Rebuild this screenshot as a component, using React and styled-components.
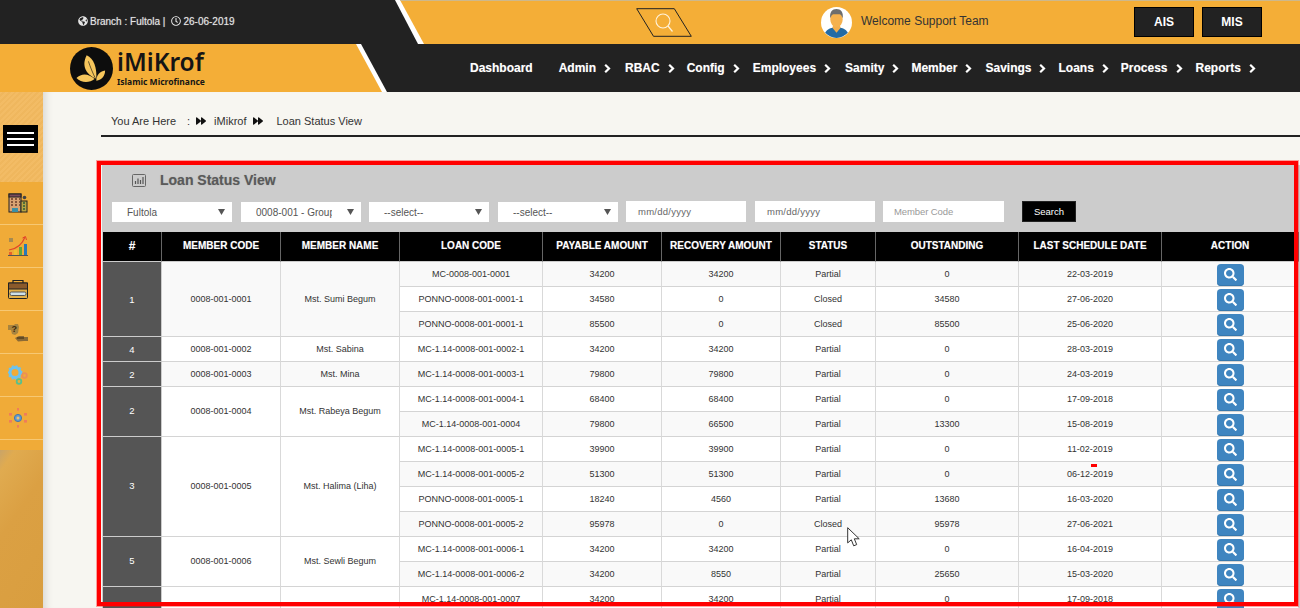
import React from "react";
import styled, { createGlobalStyle } from "styled-components";
import { FaGlobeAmericas, FaRegClock, FaForward, FaSearch } from "react-icons/fa";

const Global = createGlobalStyle`
  html, body { margin: 0; padding: 0; height: 608px; overflow: hidden; background: #f7f6f1; }
  body { font-family: "Liberation Sans", Arial, sans-serif; }
  * { box-sizing: border-box; }
`;

const Page = styled.div`
  position: relative;
  width: 1300px;
  height: 608px;
  overflow: hidden;
  display: flex;
  flex-direction: column;
`;

const HeaderRow = styled.div`
  display: flex;
  flex: none;
  background: #222;
  height: ${(p) => p.$h}px;
`;

const BranchInfo = styled.div`
  width: 395px;
  flex: none;
  padding: 0 0 2px 78px;
  display: flex;
  align-items: center;
  font-size: 10px;
  color: #e4e4e4;
  text-shadow: 0 0 1px rgba(255, 255, 255, 0.5);
  svg { font-size: 10px; margin-right: 2px; }
`;

const Sep = styled.span`
  margin: 0 6px 0 0;
`;

const TopStripe = styled.div`
  flex: 1;
  background: #fff;
  clip-path: polygon(0 0, 100% 0, 100% 100%, 23px 100%);
`;

const TopOrange = styled.div`
  height: 100%;
  background: #f4ae37;
  border-top: 1px solid #cdb88c;
  clip-path: polygon(5px 0, 100% 0, 100% 100%, 29px 100%);
  display: flex;
  align-items: center;
  padding-left: 241px;
`;

const SearchBox = styled.svg`
  width: 56px;
  height: 29px;
  flex: none;
  margin-top: -1px;
`;

const Avatar = styled.svg`
  width: 31px;
  height: 31px;
  flex: none;
  margin-left: 129px;
`;

const Welcome = styled.span`
  font-size: 12px;
  color: #333;
  margin: -3px 0 0 9px;
  width: 273px;
  flex: none;
`;

const TopButton = styled.div`
  width: 60px;
  height: 30px;
  flex: none;
  margin-right: 8px;
  margin-top: -1px;
  background: #222;
  border: 1px solid #000;
  color: #fff;
  font-size: 12px;
  font-weight: bold;
  display: flex;
  align-items: center;
  justify-content: center;
`;

const LogoStripe = styled.div`
  width: 387px;
  flex: none;
  background: #fff;
  clip-path: polygon(0 0, 361px 0, 100% 100%, 0 100%);
`;

const LogoOrange = styled.div`
  height: 100%;
  background: #f4ae37;
  clip-path: polygon(0 0, 356px 0, 382px 100%, 0 100%);
  display: flex;
  align-items: center;
  padding-left: 70px;
`;

const LogoMark = styled.svg`
  width: 43px;
  height: 43px;
  flex: none;
`;

const LogoText = styled.div`
  margin-left: 4px;
  display: flex;
  flex-direction: column;
  color: #151515;
  font-family: "Noto Sans", "Open Sans", sans-serif;
`;

const LogoName = styled.span`
  font-size: 24.5px;
  font-weight: 600;
  line-height: 26px;
`;

const LogoSub = styled.span`
  font-size: 8.5px;
  font-weight: 700;
  line-height: 10px;
  margin-top: 2px;
`;

const Nav = styled.nav`
  display: flex;
  align-items: center;
  margin-left: 83px;
  color: #fff;
  font-size: 12px;
  font-weight: bold;
  text-shadow: 0 0 1px rgba(255, 255, 255, 0.4);
`;

const NavItem = styled.span`
  display: flex;
  align-items: center;
  gap: 8px;
  margin-right: ${(p) => p.$gap}px;
`;

const Chevron = styled.svg`
  width: 7px;
  height: 9px;
  flex: none;
`;

const Body = styled.div`
  flex: 1;
  min-height: 0;
  display: flex;
`;

const Sidebar = styled.aside`
  width: 43px;
  flex: none;
  display: flex;
  flex-direction: column;
  background: #f4ae37;
`;

const SideTop = styled.div`
  height: 90px;
  flex: none;
  padding: 33px 0 0 3px;
  background:
    repeating-linear-gradient(135deg, rgba(255, 255, 255, 0.04) 0 2px, rgba(0, 0, 0, 0.012) 2px 4px),
    #f2b95f;
`;

const Hamburger = styled.div`
  width: 35px;
  height: 28px;
  background: #000;
  display: flex;
  flex-direction: column;
  justify-content: center;
  gap: 4px;
  padding: 0 4px;
`;

const HamburgerLine = styled.span`
  height: 2px;
  background: #fff;
`;

const SideItem = styled.div`
  height: 43px;
  flex: none;
  border-bottom: 1px solid #f7c873;
  background: #f0ab38;
  display: flex;
  align-items: center;
  padding-left: 8px;
`;

const SideIcon = styled.svg`
  width: 20px;
  height: 20px;
`;

const SideGap = styled.div`
  height: 10px;
  flex: none;
  background: #f0ab38;
`;

const SideWood = styled.div`
  flex: 1;
  background:
    linear-gradient(125deg, #c9a468 0, #e0ab50 10%, #dba043 40%, #d99e3f 100%);
`;

const Main = styled.main`
  flex: 1;
  min-width: 0;
  padding-left: 58px;
  background: #f7f6f1;
  box-shadow: inset 9px 0 8px -7px rgba(0, 0, 0, 0.14);
`;

const Crumbs = styled.div`
  display: flex;
  align-items: center;
  height: 45px;
  padding: 14px 0 0 10px;
  border-bottom: 2px solid #222;
  font-size: 11px;
  color: #333;
  svg { font-size: 10px; color: #111; }
`;

const CrumbText = styled.span`
  margin-right: ${(p) => p.$mr}px;
`;

const CrumbIcon = styled.span`
  display: inline-flex;
  margin-right: ${(p) => p.$mr}px;
`;

const Panel = styled.section`
  margin: 28px 0 0 1px;
  background: #ccc;
  padding-top: 8px;
`;

const PanelTitle = styled.h2`
  margin: 0;
  height: 28px;
  padding-left: 30px;
  display: flex;
  align-items: flex-start;
  font-size: 14px;
  line-height: 15px;
  font-weight: bold;
  color: #5a5a5a;
  text-shadow: 0 0 1px rgba(80, 80, 80, 0.4);
`;

const TitleIcon = styled.svg`
  width: 14px;
  height: 13px;
  margin-right: 14px;
  flex: none;
  margin-top: 1px;
`;

const Filters = styled.div`
  display: flex;
  align-items: flex-end;
  height: 21px;
  padding-left: 10px;
  margin-bottom: 10px;
`;

const SelectBox = styled.div`
  width: 120px;
  height: 20px;
  flex: none;
  margin-right: ${(p) => p.$mr}px;
  background: #fff;
  display: flex;
  align-items: center;
  padding: 0 7px 0 15px;
  font-size: 10px;
  color: #555;
`;

const SelectText = styled.span`
  width: 76px;
  flex: none;
  overflow: hidden;
  white-space: nowrap;
`;

const Caret = styled.svg`
  width: 7px;
  height: 6px;
  flex: none;
  margin-left: auto;
`;

const FieldBox = styled.div`
  width: ${(p) => p.$w}px;
  height: 21px;
  flex: none;
  margin-right: ${(p) => p.$mr}px;
  background: #fff;
  display: flex;
  align-items: center;
  padding-left: ${(p) => p.$pl}px;
  font-size: 9.5px;
  color: ${(p) => (p.$muted ? "#999" : "#666")};
  letter-spacing: ${(p) => (p.$muted ? "-0.1px" : "0.25px")};
`;

const SearchButton = styled.div`
  width: 54px;
  height: 21px;
  flex: none;
  background: #000;
  border: 1px solid #222;
  color: #fff;
  font-size: 9.5px;
  display: flex;
  align-items: center;
  justify-content: center;
`;

const Table = styled.table`
  width: 1196px;
  margin-left: 1px;
  table-layout: fixed;
  border-collapse: separate;
  border-spacing: 0;
  font-size: 9px;
  color: #333;
`;

const Th = styled.th`
  height: 30px;
  padding: 0 0 2px;
  background: #000;
  color: #fff;
  font-size: ${(p) => (p.$big ? 12 : 10)}px;
  font-weight: bold;
  text-align: center;
  vertical-align: middle;
  border-right: 1px solid #666;
  border-bottom: 1px solid #ccc;
  text-shadow: 0 0 1px rgba(255, 255, 255, 0.4);
`;

const Tr = styled.tr`
  &:nth-child(odd) td { background: #f9f9f9; }
  &:nth-child(even) td { background: #fff; }
`;

const Td = styled.td`
  height: 25px;
  padding: 0 0 ${(p) => (p.$lift ? 2 : 0)}px;
  text-align: center;
  vertical-align: middle;
  border-right: 1px solid #d9d9d9;
  border-bottom: 1px solid #d4d4d4;
`;

const IndexTd = styled(Td)`
  &&& { background: #555; }
  color: #fff;
  font-size: 9.5px;
  border-right-color: #ccc;
  border-bottom-color: #ccc;
`;

const ActionButton = styled.div`
  width: 27px;
  height: 22px;
  margin: 1px auto 0;
  background: #3f85c0;
  border-radius: 4px;
  box-shadow: inset 0 -1px 0 #3577ad;
  color: #fff;
  display: flex;
  align-items: center;
  justify-content: center;
  svg { font-size: 13px; }
`;

const RedFrame = styled.div`
  position: absolute;
  left: 97px;
  top: 161px;
  width: 1201px;
  height: 445px;
  border: 4px solid #f00;
  box-shadow: 0 0 0 1px rgba(255, 0, 0, 0.35);
  pointer-events: none;
`;

const RedMark = styled.div`
  position: absolute;
  left: 1091px;
  top: 464px;
  width: 6px;
  height: 3px;
  background: #f00;
`;

const Cursor = styled.svg`
  position: absolute;
  left: 847px;
  top: 527px;
  width: 14px;
  height: 20px;
`;

const navItems = [
  ["Admin", 14], ["RBAC", 12], ["Config", 13], ["Employees", 14], ["Samity", 12], ["Member", 13],
  ["Savings", 12], ["Loans", 12], ["Process", 13], ["Reports", 0],
];

const widths = [59, 119, 119, 143, 119, 119, 95, 143, 143, 137];
const heads = ["#", "MEMBER CODE", "MEMBER NAME", "LOAN CODE", "PAYABLE AMOUNT", "RECOVERY AMOUNT", "STATUS", "OUTSTANDING", "LAST SCHEDULE DATE", "ACTION"];

const groups = [
  ["1", "0008-001-0001", "Mst. Sumi Begum", [
    ["MC-0008-001-0001", "34200", "34200", "Partial", "0", "22-03-2019"],
    ["PONNO-0008-001-0001-1", "34580", "0", "Closed", "34580", "27-06-2020"],
    ["PONNO-0008-001-0001-1", "85500", "0", "Closed", "85500", "25-06-2020"],
  ]],
  ["4", "0008-001-0002", "Mst. Sabina", [
    ["MC-1.14-0008-001-0002-1", "34200", "34200", "Partial", "0", "28-03-2019"],
  ]],
  ["2", "0008-001-0003", "Mst. Mina", [
    ["MC-1.14-0008-001-0003-1", "79800", "79800", "Partial", "0", "24-03-2019"],
  ]],
  ["2", "0008-001-0004", "Mst. Rabeya Begum", [
    ["MC-1.14-0008-001-0004-1", "68400", "68400", "Partial", "0", "17-09-2018"],
    ["MC-1.14-0008-001-0004", "79800", "66500", "Partial", "13300", "15-08-2019"],
  ]],
  ["3", "0008-001-0005", "Mst. Halima (Liha)", [
    ["MC-1.14-0008-001-0005-1", "39900", "39900", "Partial", "0", "11-02-2019"],
    ["MC-1.14-0008-001-0005-2", "51300", "51300", "Partial", "0", "06-12-2019"],
    ["PONNO-0008-001-0005-1", "18240", "4560", "Partial", "13680", "16-03-2020"],
    ["PONNO-0008-001-0005-2", "95978", "0", "Closed", "95978", "27-06-2021"],
  ]],
  ["5", "0008-001-0006", "Mst. Sewli Begum", [
    ["MC-1.14-0008-001-0006-1", "34200", "34200", "Partial", "0", "16-04-2019"],
    ["MC-1.14-0008-001-0006-2", "34200", "8550", "Partial", "25650", "15-03-2020"],
  ]],
  ["", "", "", [
    ["MC-1.14-0008-001-0007", "34200", "34200", "Partial", "0", "17-09-2018"],
  ]],
];

const CaretIcon = () => (
  <Caret viewBox="0 0 7 6"><path d="M0 0h7L3.5 6z" fill="#555" /></Caret>
);

const ChevronIcon = () => (
  <Chevron viewBox="0 0 7 9">
    <path d="M1.2 .8L5 4.5 1.2 8.2" fill="none" stroke="#fff" strokeWidth="2.2" />
  </Chevron>
);

const sideIcons = [
  <>
    <rect x="1" y="1" width="12" height="18" fill="#d9a273" stroke="#222" />
    <rect x="1" y="1" width="12" height="3" fill="#7a4a5a" stroke="#222" />
    <path d="M3 6h2M7 6h2M11 6h1M3 9h2M7 9h2M11 9h1M3 12h2M7 12h2M11 12h1" stroke="#6b3d2a" strokeWidth="1.5" />
    <rect x="4" y="15" width="6" height="4" fill="#3b8fa6" />
    <rect x="13" y="8" width="6" height="11" fill="#b9a341" stroke="#222" />
    <path d="M15 10h2M15 13h2M15 16h2" stroke="#2f5d3a" strokeWidth="1.5" />
    <circle cx="16.5" cy="4.5" r="1.8" fill="#444" />
  </>,
  <>
    <rect x="1" y="2" width="4" height="4" fill="#a68a50" />
    <path d="M0 19.5h20" stroke="#555" />
    <rect x="1" y="16" width="3" height="3" fill="#e8622a" />
    <rect x="6" y="14" width="3" height="5" fill="#f0c030" />
    <rect x="11" y="11" width="3" height="8" fill="#5fa83c" />
    <rect x="16" y="8" width="3" height="11" fill="#2a79b8" />
    <path d="M1 14C8 13 14 9 17 1" fill="none" stroke="#e2452a" strokeWidth="1.2" />
    <path d="M14.5 2L17.5 .5l1 3.5" fill="none" stroke="#e2452a" />
  </>,
  <>
    <path d="M5 4V1.5h10V4" fill="none" stroke="#222" strokeWidth="1.2" />
    <rect x=".5" y="4" width="19" height="15.5" rx="1" fill="#e3b04a" stroke="#222" />
    <rect x=".5" y="4" width="19" height="6" fill="#8a5a2b" stroke="#222" />
    <rect x="2" y="13" width="16" height="3.5" rx="1.5" fill="#cfe0e8" stroke="#555" />
  </>,
  <>
    <path d="M0 3h6l1-1h3l1 3-1 6-3 2-3-1-1-4H0z" fill="#a8843f" />
    <text x="3.5" y="10" fontSize="9" fontWeight="bold" fill="#3a2a10" fontFamily="Liberation Sans">?</text>
    <path d="M7 16l4-2h5v1h4v4h-4l-6 .5z" fill="#8b6a35" />
    <path d="M9 16h7" stroke="#3a2a10" />
  </>,
  <>
    <circle cx="7" cy="7.5" r="5" fill="none" stroke="#6bc3ef" strokeWidth="3" />
    <circle cx="7" cy="7.5" r="6.7" fill="none" stroke="#6bc3ef" strokeWidth="1.4" strokeDasharray="2 2" />
    <circle cx="16.5" cy="10.5" r="2.3" fill="none" stroke="#ec8f55" strokeWidth="1.8" />
    <circle cx="11" cy="16.5" r="2.3" fill="none" stroke="#58c08c" strokeWidth="1.8" />
  </>,
  <>
    <circle cx="10" cy="10" r="3.6" fill="#5f9ad0" stroke="#4a78a8" />
    <circle cx="10" cy="10" r="1.5" fill="#e9c17a" />
    <g fill="#ef7d5a">
      <rect x="9" y="0" width="2" height="2.6" />
      <rect x="9" y="17" width="2" height="2.6" />
      <rect x="1" y="5" width="3" height="2.6" />
      <rect x="16" y="5" width="3" height="2.6" />
      <rect x="1" y="12" width="3" height="2.6" />
      <rect x="16" y="12" width="3" height="2.6" />
    </g>
  </>,
];

const LoanRow = ({ lead, row }) => (
  <Tr>
    {lead}
    {row.map((v, i) => <Td key={i}>{v}</Td>)}
    <Td><ActionButton><FaSearch /></ActionButton></Td>
  </Tr>
);

export default function App() {
  return (
    <Page>
      <Global />
      <HeaderRow $h={44}>
        <BranchInfo>
          <FaGlobeAmericas />
          Branch : Fultola |<Sep />
          <FaRegClock />
          26-06-2019
        </BranchInfo>
        <TopStripe>
          <TopOrange>
            <SearchBox viewBox="0 0 56 29">
              <path d="M.7 .7h37.6l17 27.6H17.5z" fill="none" stroke="#222" />
              <circle cx="27" cy="13" r="7" fill="none" stroke="#fff3dc" strokeWidth="1.1" />
              <path d="M32 18l4.5 5.5" stroke="#fff3dc" strokeWidth="1.2" />
            </SearchBox>
            <Avatar viewBox="0 0 30 30">
              <circle cx="15" cy="15" r="15" fill="#fff" />
              <path d="M4 25c2-4 6-5 8-5h6c2 0 6 1 8 5-3 3-7 5-11 5s-8-2-11-5z" fill="#236ba4" />
              <path d="M11 20l4 5 4-5-1-3h-6z" fill="#f4ae4c" />
              <ellipse cx="15" cy="12" rx="6" ry="7.5" fill="#f5b14e" />
              <path d="M9 11c-1-6 2-9 6-9s7 3 6 9c-1-3-2-4-3-4h-6c-1 0-2 1-3 4z" fill="#6d6d6d" />
            </Avatar>
            <Welcome>Welcome Support Team</Welcome>
            <TopButton>AIS</TopButton>
            <TopButton>MIS</TopButton>
          </TopOrange>
        </TopStripe>
      </HeaderRow>

      <HeaderRow $h={48}>
        <LogoStripe>
          <LogoOrange>
            <LogoMark viewBox="0 0 42 42">
              <circle cx="21" cy="21" r="21" fill="#0d0d0d" />
              <path d="M16.3 8c7 3 10 12 9.4 23C18 28 10 20 16.3 8z" fill="#f6c65c" />
              <path d="M6.3 30.3c5-5 12-4.500 17.700 1-5 4-13 4-17.700-1z" fill="#f6c65c" />
              <path d="M34.300 23c0 5-3 9-8.600 10 0-5 3-9 8.600-10z" fill="#f6c65c" />
              <path d="M18 14c2 6 4 11 7 17" fill="none" stroke="#0d0d0d" strokeWidth=".6" />
            </LogoMark>
            <LogoText>
              <LogoName>iMiKrof</LogoName>
              <LogoSub>Islamic Microfinance</LogoSub>
            </LogoText>
          </LogoOrange>
        </LogoStripe>
        <Nav>
          <NavItem $gap={26}>Dashboard</NavItem>
          {navItems.map(([t, g]) => (
            <NavItem key={t} $gap={g}>{t}<ChevronIcon /></NavItem>
          ))}
        </Nav>
      </HeaderRow>

      <Body>
        <Sidebar>
          <SideTop>
            <Hamburger>
              <HamburgerLine /><HamburgerLine /><HamburgerLine />
            </Hamburger>
          </SideTop>
          {sideIcons.map((icon, i) => (
            <SideItem key={i}><SideIcon viewBox="0 0 20 20">{icon}</SideIcon></SideItem>
          ))}
          <SideGap />
          <SideWood />
        </Sidebar>
        <Main>
          <Crumbs>
            <CrumbText $mr={11}>You Are Here</CrumbText>
            <CrumbText $mr={6}>:</CrumbText>
            <CrumbIcon $mr={8}><FaForward /></CrumbIcon>
            <CrumbText $mr={7}>iMikrof</CrumbText>
            <CrumbIcon $mr={13}><FaForward /></CrumbIcon>
            <CrumbText $mr={0}>Loan Status View</CrumbText>
          </Crumbs>
          <Panel>
            <PanelTitle>
              <TitleIcon viewBox="0 0 14 13">
                <rect x=".5" y=".5" width="13" height="12" rx="1" fill="none" stroke="#666" />
                <path d="M3.500 10V7M6 10V4.500M8.500 10V6M11 10V3" stroke="#555" strokeWidth="1.2" />
              </TitleIcon>
              Loan Status View
            </PanelTitle>
            <Filters>
              <SelectBox $mr={9}><SelectText>Fultola</SelectText><CaretIcon /></SelectBox>
              <SelectBox $mr={8}><SelectText>0008-001 - Group</SelectText><CaretIcon /></SelectBox>
              <SelectBox $mr={9}><SelectText>--select--</SelectText><CaretIcon /></SelectBox>
              <SelectBox $mr={8}><SelectText>--select--</SelectText><CaretIcon /></SelectBox>
              <FieldBox $w={120} $mr={9} $pl={12}>mm/dd/yyyy</FieldBox>
              <FieldBox $w={120} $mr={8} $pl={12}>mm/dd/yyyy</FieldBox>
              <FieldBox $w={121} $mr={18} $pl={11} $muted>Member Code</FieldBox>
              <SearchButton>Search</SearchButton>
            </Filters>
            <Table>
              <colgroup>
                {widths.map((w, i) => <col key={i} width={w} />)}
              </colgroup>
              <thead>
                <tr>{heads.map((h) => <Th key={h} $big={h === "#"}>{h}</Th>)}</tr>
              </thead>
              <tbody>
                {groups.flatMap(([n, code, name, rows], gi) =>
                  rows.map((row, ri) => {
                    const lift = rows.length % 2 === 0;
                    return (
                      <LoanRow
                        key={`${gi}-${ri}`}
                        row={row}
                        lead={ri === 0 ? (
                          <>
                            <IndexTd rowSpan={rows.length} $lift={lift}>{n}</IndexTd>
                            <Td rowSpan={rows.length} $lift={lift}>{code}</Td>
                            <Td rowSpan={rows.length} $lift={lift}>{name}</Td>
                          </>
                        ) : null}
                      />
                    );
                  })
                )}
              </tbody>
            </Table>
          </Panel>
        </Main>
      </Body>

      <RedMark />
      <Cursor viewBox="0 0 14 20">
        <path d="M.7 .7v15.2l3.6-3.1 2.4 6 3-1.2-2.4-5.8h4.9z" fill="#fff" stroke="#333" />
      </Cursor>
      <RedFrame />
    </Page>
  );
}
